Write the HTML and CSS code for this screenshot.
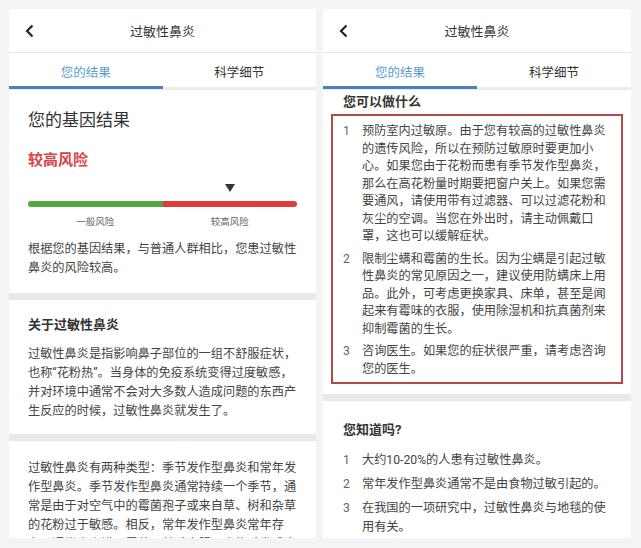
FILE: index.html
```html
<!DOCTYPE html>
<html lang="zh-CN">
<head>
<meta charset="utf-8">
<title>过敏性鼻炎</title>
<link rel="stylesheet" href="styles.css">
</head>
<body>
<div class="screens">
  <section class="phone phone-left">
    <header class="topbar">
      <span class="back"><svg width="9" height="14" viewBox="0 0 9 14"><polyline points="7.5,1.5 2,7 7.5,12.5" fill="none" stroke="#222" stroke-width="2.2"/></svg></span>
      <h1 class="title">过敏性鼻炎</h1>
      <span></span>
    </header>
    <nav class="tabs">
      <div class="tab active">您的结果</div>
      <div class="tab">科学细节</div>
    </nav>
    <div class="scroll">
      <div class="card result">
        <h2 class="result-title">您的基因结果</h2>
        <div class="risk">较高风险</div>
        <div class="meter">
          <div class="marker-row"><span></span><span class="marker-cell"><span class="marker"></span></span></div>
          <div class="bar"><span class="green"></span><span class="red"></span></div>
          <div class="labels"><span>一般风险</span><span>较高风险</span></div>
        </div>
        <p class="text">根据您的基因结果，与普通人群相比，您患过敏性鼻炎的风险较高。</p>
      </div>
      <div class="card about">
        <h3 class="heading">关于过敏性鼻炎</h3>
        <p class="text">过敏性鼻炎是指影响鼻子部位的一组不舒服症状，也称“花粉热”。当身体的免疫系统变得过度敏感，并对环境中通常不会对大多数人造成问题的东西产生反应的时候，过敏性鼻炎就发生了。</p>
      </div>
      <div class="card types">
        <p class="text">过敏性鼻炎有两种类型：季节发作型鼻炎和常年发作型鼻炎。季节发作型鼻炎通常持续一个季节，通常是由于对空气中的霉菌孢子或来自草、树和杂草的花粉过于敏感。相反，常年发作型鼻炎常年存在，通常由尘螨、霉菌、羊毛衣服、宠物毛发或皮屑引起。</p>
      </div>
    </div>
  </section>

  <section class="phone phone-right">
    <header class="topbar">
      <span class="back"><svg width="9" height="14" viewBox="0 0 9 14"><polyline points="7.5,1.5 2,7 7.5,12.5" fill="none" stroke="#222" stroke-width="2.2"/></svg></span>
      <h1 class="title">过敏性鼻炎</h1>
      <span></span>
    </header>
    <nav class="tabs">
      <div class="tab active">您的结果</div>
      <div class="tab">科学细节</div>
    </nav>
    <div class="scroll">
      <div class="card todo">
        <h3 class="heading">您可以做什么</h3>
        <ol class="steps highlight">
          <li><span class="num">1</span><span class="body">预防室内过敏原。由于您有较高的过敏性鼻炎的遗传风险，所以在预防过敏原时要更加小心。如果您由于花粉而患有季节发作型鼻炎，那么在高花粉量时期要把窗户关上。如果您需要通风，请使用带有过滤器、可以过滤花粉和灰尘的空调。当您在外出时，请主动佩戴口罩，这也可以缓解症状。</span></li>
          <li><span class="num">2</span><span class="body">限制尘螨和霉菌的生长。因为尘螨是引起过敏性鼻炎的常见原因之一，建议使用防螨床上用品。此外，可考虑更换家具、床单，甚至是闻起来有霉味的衣服，使用除湿机和抗真菌剂来抑制霉菌的生长。</span></li>
          <li><span class="num">3</span><span class="body">咨询医生。如果您的症状很严重，请考虑咨询您的医生。</span></li>
        </ol>
      </div>
      <div class="card facts">
        <h3 class="heading">您知道吗?</h3>
        <ol class="steps plain">
          <li><span class="num">1</span><span class="body">大约10-20%的人患有过敏性鼻炎。</span></li>
          <li><span class="num">2</span><span class="body">常年发作型鼻炎通常不是由食物过敏引起的。</span></li>
          <li><span class="num">3</span><span class="body">在我国的一项研究中，过敏性鼻炎与地毯的使用有关。</span></li>
        </ol>
      </div>
    </div>
  </section>
</div>
</body>
</html>
```

FILE: styles.css
```css
* { box-sizing: border-box; margin: 0; padding: 0; }

body {
  background: #f4f4f4;
  font-family: Roboto, "Noto Sans CJK SC", sans-serif;
  color: #333;
}

.screens {
  display: flex;
  gap: 7px;
  padding: 9px 10px 0 9px;
}

.phone {
  width: 307px;
  height: 529px;
  background: #e9e9e9;
  display: flex;
  flex-direction: column;
  overflow: hidden;
}
.phone-right { width: 308px; }

.topbar {
  flex: none;
  height: 44px;
  background: #fff;
  border-bottom: 1px solid #e4e4e4;
  display: grid;
  grid-template-columns: 40px 1fr 40px;
  align-items: center;
}
.back { display: flex; justify-content: center; align-items: center; }
.title {
  font-size: 13px;
  font-weight: normal;
  text-align: center;
  color: #333;
}

.tabs {
  flex: none;
  height: 36px;
  background: #fff;
  display: grid;
  grid-template-columns: 1fr 1fr;
  box-shadow: inset 0 -2px 0 #ececec;
}
.tab {
  display: flex;
  align-items: center;
  justify-content: center;
  font-size: 12.5px;
  color: #333;
}
.tab.active {
  color: #5b9bd5;
  box-shadow: inset 0 -3px 0 #4a80c0;
}

.scroll {
  flex: 1;
  display: flex;
  flex-direction: column;
  gap: 7px;
  padding-top: 1px;
}

.card {
  flex: none;
  background: #fff;
  padding: 0 19px;
}

.text {
  font-size: 12.2px;
  line-height: 19px;
  color: #444;
}

.heading {
  font-size: 13px;
  line-height: 18px;
  font-weight: bold;
  color: #333;
}

/* result card */
.result { padding-top: 17px; padding-bottom: 15px; }
.result-title {
  font-size: 17px;
  line-height: 26px;
  font-weight: normal;
  color: #333;
}
.risk {
  margin-top: 17px;
  font-size: 15px;
  line-height: 21px;
  font-weight: bold;
  color: #d9434a;
}
.meter { margin-top: 13px; }
.marker-row {
  display: grid;
  grid-template-columns: 1fr 1fr;
  height: 9px;
}
.marker-cell { display: flex; justify-content: center; }
.marker {
  width: 0;
  height: 0;
  border-left: 5px solid transparent;
  border-right: 5px solid transparent;
  border-top: 8px solid #333;
}
.bar {
  margin-top: 8px;
  height: 6px;
  border-radius: 3px;
  overflow: hidden;
  display: grid;
  grid-template-columns: 1fr 1fr;
}
.green { background: #4fa83c; }
.red { background: #e13b3b; }
.labels {
  margin-top: 8px;
  display: grid;
  grid-template-columns: 1fr 1fr;
  text-align: center;
  font-size: 9.5px;
  line-height: 13px;
  color: #666;
}
.result .text { margin-top: 12px; }

.about { padding-top: 16px; padding-bottom: 13px; }
.about .text { margin-top: 11px; }

.types { padding-top: 18px; padding-bottom: 20px; }

/* right panel */
.todo { padding: 3px 8px 10px; }
.todo .heading { padding-left: 12px; }

.steps { list-style: none; }
.steps li {
  display: flex;
  font-size: 12.2px;
  line-height: 17.5px;
  color: #444;
}
.steps .num {
  flex: none;
  width: 19px;
  color: #666;
}
.steps .body { width: 250px; }

.highlight {
  margin-top: 3px;
  border: 2px solid #b4484b;
  padding: 7px 9px 4px 10px;
}
.highlight li + li { margin-top: 5px; }

.facts { padding: 20px 19px 12px 20px; }
.plain { margin-top: 12px; }
.plain li { line-height: 19px; }
.plain li + li { margin-top: 5px; }
```
